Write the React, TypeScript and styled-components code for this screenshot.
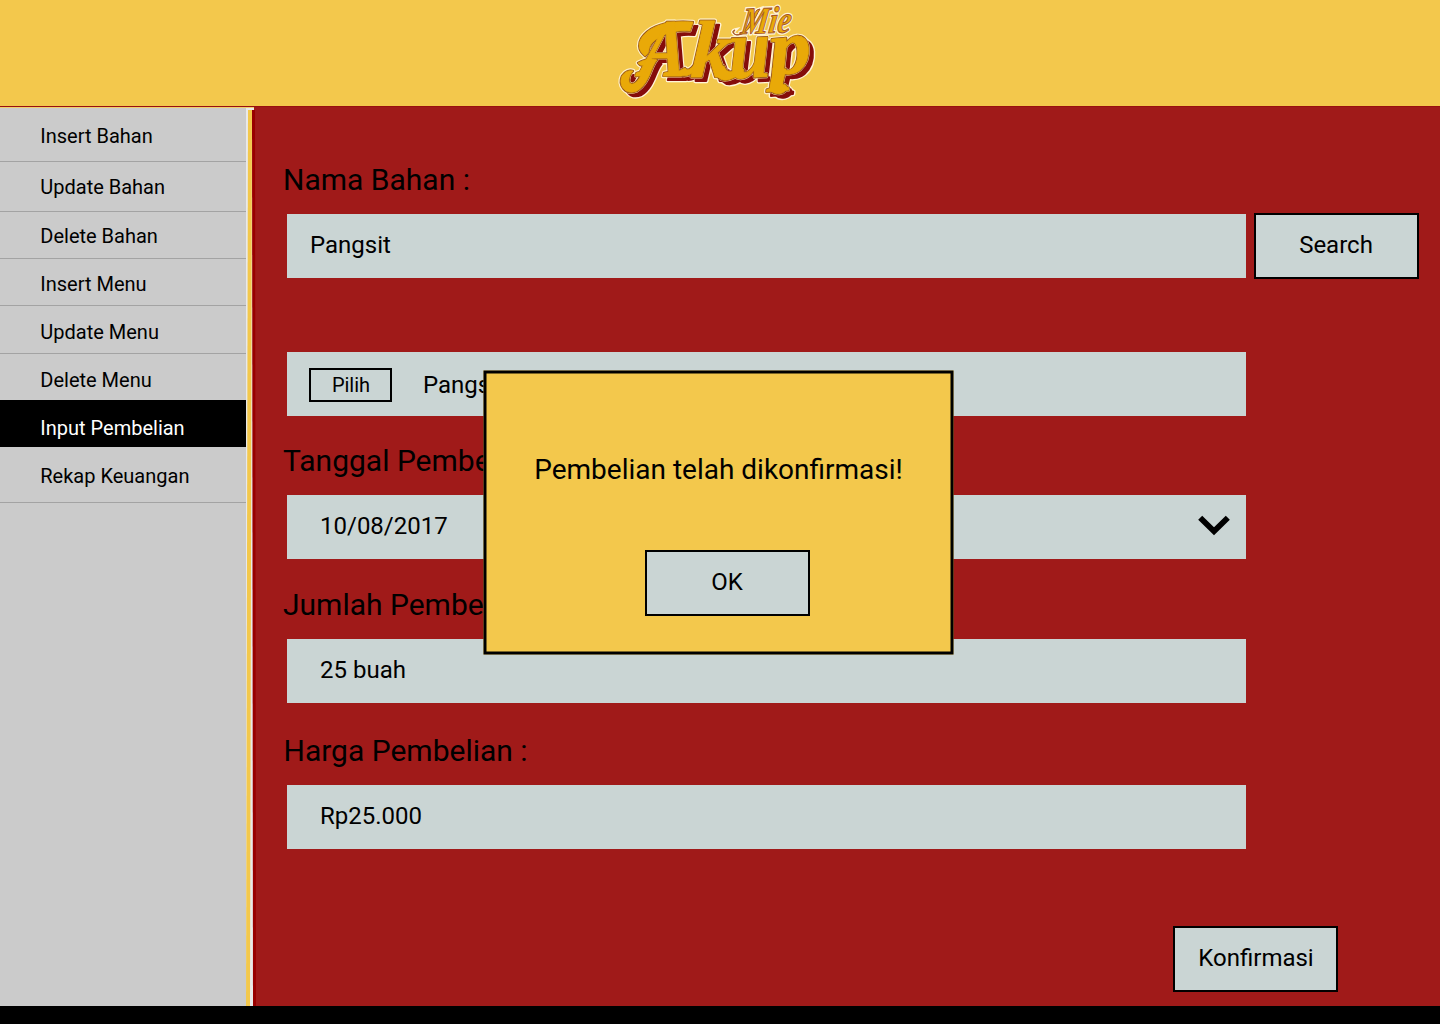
import React from "react";
import styled, { createGlobalStyle } from "styled-components";

const GlobalStyle = createGlobalStyle`
  * { box-sizing: border-box; }
  body { margin: 0; background: #000; font-family: Roboto, "Liberation Sans", sans-serif; color: #000; }
  button { font: inherit; color: inherit; }
`;

const Page = styled.div`
  position: relative;
  width: 1440px;
  height: 1024px;
  display: flex;
  flex-direction: column;
  overflow: hidden;
  background: #000;
`;

const Header = styled.header`
  height: 107px;
  flex: none;
  display: flex;
  justify-content: center;
  background: #f3c84c;
  border-bottom: 1px solid #98100f;
`;

const LogoSvg = styled.svg`
  display: block;
  width: 220px;
  height: 106px;
`;

const Body = styled.div`
  display: flex;
  height: 899px;
`;

const Sidebar = styled.nav`
  width: 246px;
  flex: none;
  background: #cbcbcb;
  border-top: 1px solid #f0cf6c;
`;

const NavItem = styled.a<{ $height: number; $top: number; $active?: boolean; $line?: boolean }>`
  display: block;
  height: ${(p) => p.$height}px;
  padding: ${(p) => p.$top}px 0 0 40.3px;
  font-size: 20px;
  line-height: 24px;
  color: ${(p) => (p.$active ? "#fff" : "#000")};
  background: ${(p) => (p.$active ? "#000" : "transparent")};
  border-bottom: ${(p) => (p.$line ? "1px solid #a3a3a3" : "none")};
`;

const Divider = styled.div`
  width: 10px;
  flex: none;
  display: grid;
  background:
    linear-gradient(#f0cf6c, #f0cf6c) 0 0 / 8px 1px no-repeat,
    linear-gradient(90deg, #e9e9e9 8px, #a01a19 8px);
  > * { grid-area: 1 / 1; }
`;

const Stripe = styled.div<{ $color: string; $shape: string }>`
  margin-top: 3px;
  background: ${(p) => p.$color};
  clip-path: polygon(${(p) => p.$shape});
`;

const Main = styled.main`
  flex: 1;
  padding: 53px 21px 0 27px;
  background: #a01a19;
  display: flex;
  flex-direction: column;
`;

const Label = styled.label<{ $top?: number; $indent?: number }>`
  height: 40px;
  margin-top: ${(p) => p.$top ?? 0}px;
  padding-left: ${(p) => p.$indent ?? 0}px;
  font-size: 30px;
  line-height: 40px;
`;

const Row = styled.div<{ $top: number }>`
  display: flex;
  gap: 8px;
  padding-left: 4px;
  margin-top: ${(p) => p.$top}px;
`;

const Field = styled.div<{ $indent: number }>`
  width: 959px;
  height: 64px;
  padding: 0 16px 0 ${(p) => p.$indent}px;
  display: flex;
  align-items: center;
  background: #cad5d4;
  font-size: 24px;
  line-height: 28px;
`;

const FieldText = styled.span`
  flex: 1;
  padding-bottom: 2px;
`;

const PickedText = styled.span`
  flex: 1;
  padding-top: 2px;
`;

const Button = styled.button`
  width: 165px;
  height: 66px;
  padding: 0 1px 2px 0;
  border: 2px solid #000;
  background: #cad5d4;
  font-size: 24px;
  line-height: 28px;
`;

const SearchButton = styled(Button)`
  margin: -1px 0;
`;

const PickButton = styled.button`
  width: 83px;
  height: 34px;
  padding: 0 0 0 1px;
  margin: 2px 31px 0 0;
  border: 2px solid #000;
  background: transparent;
  font-size: 20px;
  line-height: 24px;
`;

const ConfirmButton = styled(Button)`
  margin: 77px 81px 0 0;
  padding: 0 0 2px 1px;
  align-self: flex-end;
`;

const Dialog = styled.div`
  position: absolute;
  left: 484px;
  top: 371px;
  width: 470px;
  height: 284px;
  padding: 79px 0 0;
  display: flex;
  flex-direction: column;
  isolation: isolate;

  &::before {
    content: "";
    position: absolute;
    inset: 0;
    z-index: -1;
    background: #f3c84c;
    border: 3px solid #000;
    transform: translate(-0.5px, -0.5px);
  }
`;

const Message = styled.p`
  margin: 0;
  padding-right: 1px;
  text-align: center;
  font-size: 28px;
  line-height: 40px;
`;

const OkButton = styled(Button)`
  margin: 60px 0 0 161px;
`;

const items = [
  { label: "Insert Bahan", height: 54, top: 16, line: true },
  { label: "Update Bahan", height: 50, top: 13, line: true },
  { label: "Delete Bahan", height: 47, top: 12, line: true },
  { label: "Insert Menu", height: 47, top: 13, line: true },
  { label: "Update Menu", height: 48, top: 14, line: true },
  { label: "Delete Menu", height: 46, top: 14 },
  { label: "Input Pembelian", height: 47, top: 16, active: true },
  { label: "Rekap Keuangan", height: 56, top: 17, line: true },
];

const Logo = () => (
  <LogoSvg viewBox="610 0 220 106" role="img" aria-label="Mie Akup">
    <defs>
      <g id="akup" fontFamily="Liberation Serif, serif" fontWeight="700" fontStyle="italic" strokeLinejoin="round">
        <path d="M645 56 C634 47 640 36 651 29 C663 22 676 21 693 22 L690 31 C672 29 655 37 650 46 C648 50 650 53 645 56 Z" />
        <path d="M657 60 C651 66 650 83 637 91 C625 96 618 85 622 76 C625 71 630 70 633 71 C628 76 627 85 633 84 C640 82 642 71 646 64 C643 66 640 66 638 63 C645 59 651 58 657 60 Z" />
        <text transform="translate(639 76) skewX(-5) scale(.84 1)" fontSize="82">A</text>
        <path d="M677 72 C682 79 692 76 698 67 L694 65 C690 70 687 71 685 68 Z" />
        <text transform="translate(690 77) skewX(-3) scale(1 1)" fontSize="81">k</text>
        <path d="M715 70 C718 85 732 82 744 70 L740 66 C733 73 727 74 724 66 Z" />
        <text transform="translate(730 78) rotate(-2) scale(.86 1)" fontSize="86">u</text>
        <text transform="translate(771 75) rotate(-5) scale(1.04 .96)" fontSize="81">p</text>
        <path d="M773 68 C775 76 767 86 771 91 C776 96 786 94 787 87 C786 84 783 84 782 85 L786 69 Z" />
      </g>
      <g id="mie" fontFamily="Liberation Serif, serif" fontWeight="700" fontStyle="italic">
        <path d="M735 30 C731 34 737 37 742 33 C748 28 752 16 757 10 L760 9 C755 17 750 31 742 34 C734 37 730 31 735 30 Z" />
        <text transform="translate(740 34) rotate(-2) skewX(-10)" fontSize="38" textLength="50" lengthAdjust="spacingAndGlyphs">Mie</text>
      </g>
    </defs>
    <g fill="#fff4d7" stroke="#fff4d7" strokeWidth="4.6">
      <use href="#akup" />
      <use href="#akup" x="4.5" y="4" />
    </g>
    <use href="#akup" x="4.5" y="4" fill="#850d0b" stroke="#850d0b" strokeWidth="2" />
    <use href="#akup" fill="#f7dc9a" stroke="#f7dc9a" strokeWidth="3" />
    <use href="#akup" fill="#e9a908" stroke="#8c4a1c" strokeWidth="2.2" />
    <use href="#akup" fill="#e9a908" stroke="#e9a908" strokeWidth="0.8" />
    <use href="#mie" fill="#fff4d7" stroke="#fff4d7" strokeWidth="3.6" />
    <use href="#mie" fill="#e9a908" stroke="#a4552b" strokeWidth="1" />
  </LogoSvg>
);

const ChevronIcon = styled.svg`
  width: 32px;
  height: 22px;
  margin-bottom: 2px;
`;

const Chevron = () => (
  <ChevronIcon viewBox="0 0 32 22" fill="none" stroke="#000" strokeWidth="5.8">
    <path d="M2.2 2.7 L16 16.2 L29.8 2.7" />
  </ChevronIcon>
);

export default function App() {
  return (
    <Page>
      <GlobalStyle />
      <Header><Logo /></Header>
      <Body>
        <Sidebar>
          {items.map((i) => (
            <NavItem key={i.label} $height={i.height} $top={i.top} $active={i.active} $line={i.line}>{i.label}</NavItem>
          ))}
        </Sidebar>
        <Divider>
          <Stripe $color="#f3c84c" $shape="2px 0, 6px 0, 4px 100%, 0 100%" />
          <Stripe $color="#980000" $shape="6px 0, 9px 0, 10px 100%, 7px 100%" />
        </Divider>
        <Main>
          <Label>Nama Bahan :</Label>
          <Row $top={14}>
            <Field $indent={23}><FieldText>Pangsit</FieldText></Field>
            <SearchButton>Search</SearchButton>
          </Row>
          <Row $top={74}>
            <Field $indent={22}><PickButton>Pilih</PickButton><PickedText>Pangsit</PickedText></Field>
          </Row>
          <Label $top={25}>Tanggal Pembelian :</Label>
          <Row $top={14}>
            <Field $indent={33}><FieldText>10/08/2017</FieldText><Chevron /></Field>
          </Row>
          <Label $top={26}>Jumlah Pembelian :</Label>
          <Row $top={14}>
            <Field $indent={33}><FieldText>25 buah</FieldText></Field>
          </Row>
          <Label $top={28} $indent={0.5}>Harga Pembelian :</Label>
          <Row $top={14}>
            <Field $indent={33}><FieldText>Rp25.000</FieldText></Field>
          </Row>
          <ConfirmButton>Konfirmasi</ConfirmButton>
        </Main>
      </Body>
      <Dialog role="dialog">
        <Message>Pembelian telah dikonfirmasi!</Message>
        <OkButton>OK</OkButton>
      </Dialog>
    </Page>
  );
}
